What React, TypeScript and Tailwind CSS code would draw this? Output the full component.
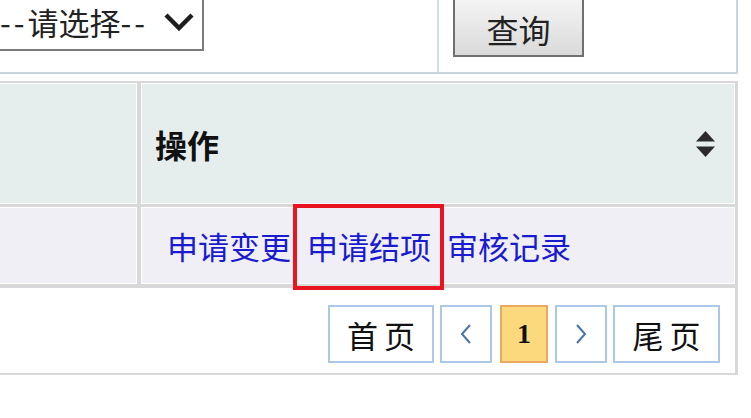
import React from "react"

const FONT = "font-['Noto_Sans_CJK_SC','Liberation_Sans',sans-serif]"

function SortIcon() {
  return (
    <svg width="21" height="26" viewBox="0 0 21 26" aria-hidden="true">
      <path d="M10.5 0 L20 10.5 L1 10.5 Z" fill="#2b2b2b" />
      <path d="M1 15.5 L20 15.5 L10.5 26 Z" fill="#2b2b2b" />
    </svg>
  )
}

function PagerButton({ children, width, active }: { children: React.ReactNode; width: string; active?: boolean }) {
  return (
    <div
      className={
        "h-[58px] flex items-center justify-center border-2 " +
        width +
        (active ? " bg-[#fdd97e] border-[#e9a961]" : " bg-white border-[#a9c9e6]")
      }
    >
      {children}
    </div>
  )
}

export default function App() {
  return (
    <div className={`w-[751px] h-[418px] bg-white overflow-hidden relative ${FONT}`}>
      {/* search form row */}
      <div className="w-[738px] h-[74px] flex border-b-2 border-r-2 border-[#c9d6df]">
        <div className="w-[439px] shrink-0 border-r-2 border-[#d3dee6]">
          <div className="ml-[-30px] mt-[-8px] w-[234px] h-[59px] border-2 border-[#7b7b7b] bg-white flex items-center pl-[28px]">
            <span className="text-[31px] leading-none text-[#222]">
              <span className="tracking-[3px]">--</span>请选择<span className="tracking-[3px]">--</span>
            </span>
            <svg width="32" height="19" viewBox="0 0 32 19" className="ml-auto mr-[7px]" aria-hidden="true">
              <polyline points="3,3 16,16 29,3" fill="none" stroke="#1e1e1e" strokeWidth="4.5" />
            </svg>
          </div>
        </div>
        <div className="flex-1">
          <button className="ml-[14px] mt-[-4px] w-[131px] h-[61px] pt-[4px] border-2 border-[#707070] bg-gradient-to-b from-[#f5f5f5] to-[#dadada] text-[32px] leading-none text-[#222]">
            查询
          </button>
        </div>
      </div>

      {/* list table */}
      <div className="mt-[7px] ml-[-20px] w-[758px] grid grid-cols-[155px_1fr] gap-x-[4px] gap-y-[3px] bg-[#d8d8d8] pt-[2px] pl-[2px] pr-[3px] pb-[2px]">
        <div className="h-[121px] border border-white bg-[#e5eded]" />
        <div className="h-[121px] border border-white bg-[#e5eded] flex items-center justify-between pl-[13px] pr-[18px]">
          <span className="text-[32px] font-bold leading-none text-[#111]">操作</span>
          <SortIcon />
        </div>

        <div className="h-[77px] border border-white bg-[#efeff5]" />
        <div className="h-[77px] border border-white bg-[#efeff5] flex items-center gap-[16px] pl-[25px] text-[31px] leading-none text-[#1a1acf]">
          <a>申请变更</a>
          <a>申请结项</a>
          <a>审核记录</a>
        </div>

        <div className="col-span-2 mt-[1px] h-[85px] border border-white bg-white flex justify-end items-start pt-[16px] pr-[14px]">
          <PagerButton width="w-[106px]">
            <span className="text-[31px] leading-none tracking-[6px] pl-[6px] text-[#111]">首页</span>
          </PagerButton>
          <div className="w-[6px]" />
          <PagerButton width="w-[52px]">
            <svg width="12" height="20" viewBox="0 0 12 20" aria-hidden="true">
              <polyline points="10,1 2,10 10,19" fill="none" stroke="#4a72b0" strokeWidth="2" />
            </svg>
          </PagerButton>
          <div className="w-[8px]" />
          <PagerButton width="w-[48px]" active>
            <span className="font-['Liberation_Serif',serif] font-bold text-[28px] leading-none text-[#111]">1</span>
          </PagerButton>
          <div className="w-[7px]" />
          <PagerButton width="w-[52px]">
            <svg width="12" height="20" viewBox="0 0 12 20" aria-hidden="true">
              <polyline points="2,1 10,10 2,19" fill="none" stroke="#4a72b0" strokeWidth="2" />
            </svg>
          </PagerButton>
          <div className="w-[6px]" />
          <PagerButton width="w-[107px]">
            <span className="text-[31px] leading-none tracking-[6px] pl-[6px] text-[#111]">尾页</span>
          </PagerButton>
        </div>
      </div>

      {/* annotation highlight */}
      <div className="absolute left-[293px] top-[204px] w-[151px] h-[86px] border-4 border-[#e8141f]" />
    </div>
  )
}
